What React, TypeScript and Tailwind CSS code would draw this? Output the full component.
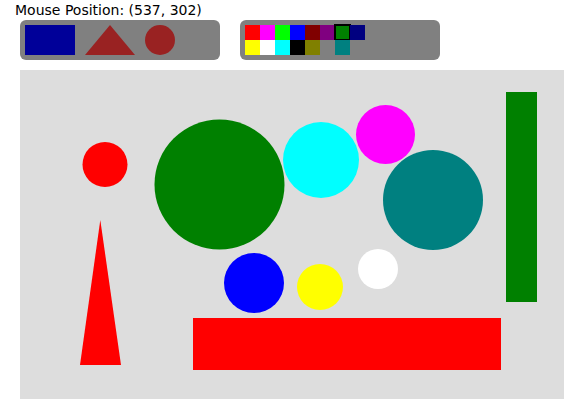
import React from 'react';

const row1 = ['#ff0000', '#ff00ff', '#00ff00', '#0000ff', '#800000', '#800080', '#008000', '#000080'];
const row2 = ['#ffff00', '#ffffff', '#00ffff', '#000000', '#808000', '#808080', '#008080', '#808080'];
const selected = '#008000';

function Swatch({ color, active }: { color: string; active: boolean }) {
  return (
    <div
      className={
        active
          ? 'w-[15px] h-[15px] outline-2 -outline-offset-1 outline-black'
          : 'w-[15px] h-[15px]'
      }
      style={{ backgroundColor: color }}
    />
  );
}

export default function App() {
  return (
    <div className="w-[583px] h-[418px] bg-white font-['DejaVu_Sans',sans-serif] text-black">
      {/* status line */}
      <div className="h-5 pl-[15px] text-[14px] leading-5">Mouse Position: (537, 302)</div>

      {/* toolbars */}
      <div className="flex gap-5 pl-5">
        <div className="w-[200px] h-10 bg-[#808080] rounded-md flex items-center pl-[5px] gap-2.5">
          <div className="w-[50px] h-[30px] bg-[#000099]" />
          <svg width="50" height="30" viewBox="0 0 50 30">
            <polygon points="25,0 50,30 0,30" fill="#992222" />
          </svg>
          <div className="w-[30px] h-[30px] rounded-full bg-[#992222]" />
        </div>

        <div className="w-[200px] h-10 bg-[#808080] rounded-md pl-[5px] pt-[5px]">
          <div className="flex">
            {row1.map((c, i) => (
              <Swatch key={i} color={c} active={c === selected && i === 6} />
            ))}
          </div>
          <div className="flex">
            {row2.map((c, i) => (
              <Swatch key={i} color={c} active={false} />
            ))}
          </div>
        </div>
      </div>

      {/* drawing canvas */}
      <div className="ml-5 mt-2.5 w-[544px] h-[329px] bg-[#dddddd]">
        <svg width="544" height="329" viewBox="0 0 544 329">
          <circle cx="85" cy="94.5" r="22.5" fill="#ff0000" />
          <circle cx="199.5" cy="114.5" r="65" fill="#008000" />
          <circle cx="301" cy="90" r="38" fill="#00ffff" />
          <circle cx="365.5" cy="64.5" r="29.5" fill="#ff00ff" />
          <circle cx="413" cy="130" r="50" fill="#008080" />
          <circle cx="234" cy="213" r="30" fill="#0000ff" />
          <circle cx="300" cy="217" r="23" fill="#ffff00" />
          <circle cx="358" cy="199" r="20" fill="#ffffff" />
          <polygon points="80.3,150 101,295 60,295" fill="#ff0000" />
          <rect x="173" y="248" width="308" height="52" fill="#ff0000" />
          <rect x="486" y="22" width="31" height="210" fill="#008000" />
        </svg>
      </div>
    </div>
  );
}
